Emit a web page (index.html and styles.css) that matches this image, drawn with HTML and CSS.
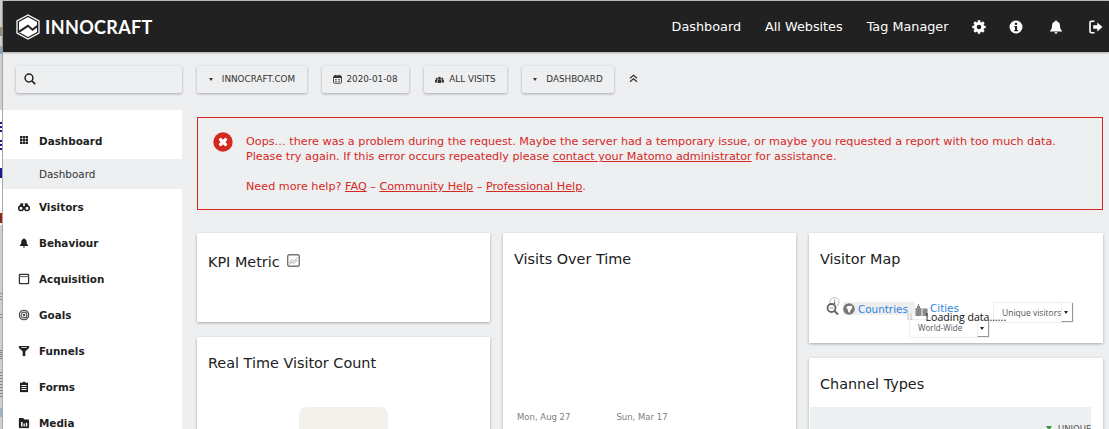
FILE: index.html
```html
<!DOCTYPE html>
<html lang="en">
<head>
<meta charset="utf-8">
<title>Innocraft Dashboard</title>
<link rel="stylesheet" href="styles.css">
</head>
<body>
<div class="strip">
  <span class="strip-bit bit-white"></span>
  <span class="strip-bit bit-a"></span>
  <span class="strip-bit bit-b"></span>
  <span class="strip-bit bit-c"></span>
  <span class="strip-bit bit-c2"></span>
  <span class="strip-bit bit-d"></span>
  <span class="strip-bit bit-e"></span>
  <span class="strip-bit bit-f"></span>
  <span class="strip-bit bit-g"></span>
  <span class="strip-bit bit-h"></span>
  <span class="strip-bit bit-i"></span>
  <span class="strip-bit bit-j"></span>
</div>
<div class="app">
  <header class="topbar">
    <a class="brand">
      <svg class="brand-mark" viewBox="0 0 24 26" width="24" height="26">
        <path d="M12 1 L23 7 V19 L12 25 L1 19 V7 Z" fill="none" stroke="#fff" stroke-width="1.3"/>
        <path d="M12 3 L21 8 V11 L16.5 14.5 L12 10.5 L3 16.5 V8 Z" fill="#fff"/>
        <path d="M3 19 L12 13 L16.5 17 L21 13.500 V18 L12 23 L3 18 Z" fill="#fff"/>
      </svg>
      <span class="brand-name">INNOCRAFT</span>
    </a>
    <nav class="topnav">
      <a class="topnav-link link-dashboard">Dashboard</a>
      <a class="topnav-link link-websites">All Websites</a>
      <a class="topnav-link link-tag">Tag Manager</a>
      <svg class="topicon icon-gear" viewBox="0 0 14 14" width="14" height="14">
        <g stroke="#fff" stroke-width="2.600">
          <path d="M7 0.300V13.700M0.300 7H13.700M2.260 2.260L11.740 11.740M2.260 11.740L11.740 2.260"/>
        </g>
        <circle cx="7" cy="7" r="5.200" fill="#fff"/>
        <circle cx="7" cy="7" r="2.300" fill="#212121"/>
      </svg>
      <svg class="topicon icon-info" viewBox="0 0 14 14" width="14" height="14">
        <circle cx="7" cy="7" r="6.500" fill="#fff"/>
        <rect x="5.900" y="2.700" width="2.200" height="2.200" rx="0.400" fill="#212121"/>
        <path d="M5.300 6H8.100V10H9V11.200H5.200V10H6V7.200H5.300Z" fill="#212121"/>
      </svg>
      <svg class="topicon icon-bell" viewBox="0 0 14 14" width="14" height="14">
        <path d="M7 0.500C7.600 0.500 8 0.900 8 1.500C10 2 11 3.600 11 6C11 8.700 12 9.800 13 10.800V11.500H1V10.800C2 9.800 3 8.700 3 6C3 3.600 4 2 6 1.500C6 0.900 6.400 0.500 7 0.500ZM5.500 12.300H8.500C8.500 13.200 7.800 13.800 7 13.800C6.200 13.800 5.500 13.200 5.500 12.300Z" fill="#fff"/>
      </svg>
      <svg class="topicon icon-exit" viewBox="0 0 14 14" width="14" height="14">
        <path d="M5.500 1.200H2.500C1.700 1.200 1 1.900 1 2.700V11.300C1 12.100 1.700 12.800 2.500 12.800H5.500" fill="none" stroke="#fff" stroke-width="1.600"/>
        <path d="M8.300 2.600L13.500 7L8.300 11.400V8.700H4.200V5.300H8.300Z" fill="#fff"/>
      </svg>
    </nav>
  </header>

  <div class="toolbar">
    <div class="tool tool-search">
      <svg viewBox="0 0 12 12" width="12" height="12">
        <circle cx="5" cy="5" r="3.900" fill="none" stroke="#212121" stroke-width="1.500"/>
        <path d="M8 8L11.200 11.200" stroke="#212121" stroke-width="1.700"/>
      </svg>
    </div>
    <div class="tool tool-site"><span class="caret"></span>INNOCRAFT.COM</div>
    <div class="tool tool-date">
      <svg viewBox="0 0 10 10" width="9" height="10">
        <path d="M1.500 1.500H8.500C9 1.500 9.500 2 9.500 2.500V8.800C9.500 9.300 9 9.700 8.500 9.700H1.500C1 9.700 0.500 9.300 0.500 8.800V2.500C0.500 2 1 1.500 1.500 1.500Z" fill="none" stroke="#333" stroke-width="1"/>
        <path d="M1 1.500H9V3.800H1ZM2.500 0.300H3.500V2H2.500ZM6.500 0.300H7.500V2H6.500ZM2.500 5H4V6.200H2.500ZM6 5H7.500V6.200H6ZM2.500 7H4V8.200H2.500ZM6 7H7.500V8.200H6Z" fill="#333"/>
      </svg>
      2020-01-08
    </div>
    <div class="tool tool-visits">
      <svg viewBox="0 0 12 9" width="9" height="7">
        <circle cx="6" cy="2.500" r="1.800" fill="#333"/>
        <circle cx="2.300" cy="3.500" r="1.500" fill="#333"/>
        <circle cx="9.700" cy="3.500" r="1.500" fill="#333"/>
        <path d="M3.500 9V6C3.500 5 4.500 4.300 6 4.300C7.500 4.300 8.500 5 8.500 6V9ZM0 8.500V6C0 5.300 1 4.800 2.800 5L2.600 8.500ZM12 8.500V6C12 5.300 11 4.800 9.200 5L9.400 8.500Z" fill="#333"/>
      </svg>
      ALL VISITS
    </div>
    <div class="tool tool-dash"><span class="caret"></span>DASHBOARD</div>
    <svg class="collapse" viewBox="0 0 9 9" width="9" height="9">
      <path d="M1 4.300L4.500 1.300L8 4.300M1 7.800L4.500 4.800L8 7.800" fill="none" stroke="#333" stroke-width="1.300"/>
    </svg>
  </div>

  <div class="body-row">
    <aside class="sidebar">
      <div class="menu-item menu-first">
        <svg class="menu-icon icon-grid" viewBox="0 0 7.500 7.500" width="8" height="8">
          <path d="M0 0H2.200V2.200H0ZM2.650 0H4.850V2.200H2.650ZM5.300 0H7.500V2.200H5.300ZM0 2.650H2.200V4.850H0ZM2.650 2.650H4.850V4.850H2.650ZM5.300 2.650H7.500V4.850H5.300ZM0 5.300H2.200V7.500H0ZM2.650 5.300H4.850V7.500H2.650ZM5.300 5.300H7.500V7.500H5.300Z" fill="#222"/>
        </svg>
        <span>Dashboard</span>
      </div>
      <div class="menu-sub">Dashboard</div>
      <div class="menu-item">
        <svg class="menu-icon" viewBox="0 0 12 9" width="12" height="9">
          <circle cx="3" cy="5.800" r="2.300" fill="#fff" stroke="#212121" stroke-width="1.600"/>
          <circle cx="9" cy="5.800" r="2.300" fill="#fff" stroke="#212121" stroke-width="1.600"/>
          <path d="M1 4.500L2.800 0.800H5.200V4H6.800V0.800H9.200L11 4.500Z" fill="#212121"/>
        </svg>
        <span>Visitors</span>
      </div>
      <div class="menu-item">
        <svg class="menu-icon" viewBox="0 0 10 11" width="9" height="11">
          <path d="M5 0.300C5.500 0.300 5.700 0.600 5.700 1C7.200 1.400 8 2.600 8 4.300C8 6.300 8.800 7.300 9.600 8V8.700H0.400V8C1.200 7.300 2 6.300 2 4.300C2 2.600 2.800 1.400 4.300 1C4.300 0.600 4.500 0.300 5 0.300ZM3.800 9.300H6.200C6.200 10 5.700 10.600 5 10.600C4.300 10.600 3.800 10 3.800 9.300Z" fill="#212121"/>
        </svg>
        <span>Behaviour</span>
      </div>
      <div class="menu-item">
        <svg class="menu-icon" viewBox="0 0 11 11" width="11" height="11">
          <rect x="0.800" y="0.800" width="9.400" height="9.400" rx="1.200" fill="none" stroke="#333" stroke-width="1.500"/>
          <path d="M1 3.200H10" stroke="#555" stroke-width="1"/>
        </svg>
        <span>Acquisition</span>
      </div>
      <div class="menu-item">
        <svg class="menu-icon" viewBox="0 0 11 11" width="11" height="11">
          <circle cx="5.500" cy="5.500" r="4.800" fill="none" stroke="#444" stroke-width="1.200"/>
          <circle cx="5.500" cy="5.500" r="2.900" fill="none" stroke="#555" stroke-width="1.200"/>
          <circle cx="5.500" cy="5.500" r="1.200" fill="#444"/>
        </svg>
        <span>Goals</span>
      </div>
      <div class="menu-item">
        <svg class="menu-icon" viewBox="0 0 11 11" width="11" height="11">
          <path d="M0 0.500H11L10.500 2.500L6.800 6V10.800H4.200V6L0.500 2.500ZM2.500 1.700L3 2.400H8L8.500 1.700Z" fill="#212121" fill-rule="evenodd"/>
        </svg>
        <span>Funnels</span>
      </div>
      <div class="menu-item">
        <svg class="menu-icon" viewBox="0 0 9 11" width="9" height="11">
          <path d="M3 0.300H6V1.300H8.500V10.800H0.500V1.300H3ZM2 3.500V4.500H7V3.500ZM2 5.500V6.500H7V5.500ZM2 7.500V8.500H7V7.500Z" fill="#212121" fill-rule="evenodd"/>
        </svg>
        <span>Forms</span>
      </div>
      <div class="menu-item">
        <svg class="menu-icon" viewBox="0 0 11 11" width="11" height="11">
          <path d="M1 0.500H4.500L6 2H9.500C10.200 2 10.700 2.500 10.700 3.200V9.500C10.700 10.200 10.200 10.700 9.500 10.700H1.500C0.800 10.700 0.300 10.200 0.300 9.500V1.200C0.300 0.800 0.600 0.500 1 0.500ZM2.500 4.500V9H4V4.500ZM5 6V9H6.300V6ZM7.300 5.300V9H8.700V5.300Z" fill="#212121" fill-rule="evenodd"/>
        </svg>
        <span>Media</span>
      </div>
    </aside>

    <main class="content">
      <section class="alert">
        <svg class="alert-icon" viewBox="0 0 20 20" width="20" height="20">
          <circle cx="10" cy="10" r="9.700" fill="#d4291f"/>
          <path d="M7.600 7.600L12.400 12.400M12.400 7.600L7.600 12.400" stroke="#fff" stroke-width="3.400" stroke-linecap="round"/>
        </svg>
        <div class="alert-text">
          <p>Oops… there was a problem during the request. Maybe the server had a temporary issue, or maybe you requested a report with too much data.<br>Please try again. If this error occurs repeatedly please <a>contact your Matomo administrator</a> for assistance.</p>
          <p>Need more help? <a>FAQ</a> – <a>Community Help</a> – <a>Professional Help</a>.</p>
        </div>
      </section>

      <div class="columns">
        <div class="column">
          <article class="card card-kpi">
            <h2 class="card-title title-kpi">KPI Metric
              <svg class="kpi-icon" viewBox="0 0 13 13" width="13" height="13">
                <rect x="0.700" y="0.700" width="11.600" height="11.600" rx="1.500" fill="none" stroke="#777" stroke-width="1.400"/>
                <path d="M2.500 9L5 5.500L7 7.500L10.500 3.500M2.500 10.500L5 8L7 9.500L10.500 6" fill="none" stroke="#999" stroke-width="0.800"/>
              </svg>
            </h2>
          </article>
          <article class="card card-realtime">
            <h2 class="card-title">Real Time Visitor Count</h2>
            <div class="gauge"></div>
          </article>
        </div>

        <div class="column">
          <article class="card card-visits">
            <h2 class="card-title">Visits Over Time</h2>
            <div class="axis"><span>Mon, Aug 27</span><span>Sun, Mar 17</span></div>
          </article>
        </div>

        <div class="column">
          <article class="card card-map">
            <h2 class="card-title">Visitor Map</h2>
            <div class="map">
              <svg class="map-zoom" viewBox="0 0 15 19" width="15" height="19">
                <circle cx="8.500" cy="5" r="4.500" fill="#fff" stroke="#bbb" stroke-width="1"/>
                <path d="M8.500 2.500V3.500M8.500 4.500V7.500" stroke="#777" stroke-width="1.300"/>
                <circle cx="5.500" cy="11" r="4" fill="#fff" stroke="#666" stroke-width="1.800"/>
                <path d="M8.500 14L12 17.500" stroke="#666" stroke-width="2"/>
                <path d="M3.500 11H7.500" stroke="#999" stroke-width="1"/>
              </svg>
              <div class="map-tab">
                <svg viewBox="0 0 13 13" width="12" height="12">
                  <circle cx="6.500" cy="6.500" r="6.300" fill="#777"/>
                  <path d="M4.500 3.500L9.500 3L10 5.500L8 8L7 11L5.500 9L5 6.500L3.500 5.500Z" fill="#fff"/>
                </svg>
                <a>Countries</a>
              </div>
              <svg class="map-city" viewBox="0 0 13 13" width="13" height="13">
                <path d="M0.500 13V5H2V3H3V1H4V3H5V5H6.500V13ZM7.500 13V5.500H12.500V13Z" fill="#888"/>
              </svg>
              <a class="map-cities">Cities</a>
              <span class="map-handle"></span>
              <div class="map-select select-region">World-Wide<i class="select-arrow"></i></div>
              <div class="map-select select-metric">Unique visitors<i class="select-arrow"></i></div>
              <div class="map-loading">Loading data......</div>
            </div>
          </article>
          <article class="card card-channel">
            <h2 class="card-title">Channel Types</h2>
            <div class="channel-table"><span class="sort-mark"></span><span class="channel-head">UNIQUE</span></div>
          </article>
        </div>
      </div>
    </main>
  </div>
</div>
</body>
</html>
```

FILE: styles.css
```css
* { box-sizing: border-box; }
html, body { margin: 0; height: 100%; }
body {
  display: flex;
  height: 429px;
  overflow: hidden;
  background: #eeeff1;
  color: #212121;
  font-family: "DejaVu Sans", sans-serif;
}
a { color: inherit; }
h2, p { margin: 0; font-weight: normal; }

.strip {
  position: relative;
  flex: 0 0 3px;
  background: #cfcfcf;
}
.strip::after {
  content: "";
  position: absolute;
  top: 0;
  bottom: 0;
  right: 0;
  width: 1px;
  background: #a8a8a8;
}
.strip-bit { position: absolute; left: 0; width: 2px; }
.bit-white { top: 110px; height: 115px; background: #fff; }
.bit-a { top: 27px; height: 9px; background: #a08d78; }
.bit-b { top: 46px; height: 8px; background: #8fa4c4; }
.bit-c { top: 122px; height: 10px; background: linear-gradient(#1a1a8c 0 2px, #fff 2px 4px, #1a1a8c 4px 6px, #fff 6px 8px, #1a1a8c 8px); }
.bit-c2 { top: 140px; height: 10px; background: linear-gradient(#1a1a8c 0 2px, #fff 2px 4px, #1a1a8c 4px 6px, #fff 6px 8px, #1a1a8c 8px); }
.bit-d { top: 168px; height: 10px; background: #1a1a8c; }
.bit-e { top: 213px; height: 10px; background: #8a2a1c; }
.bit-f { top: 293px; height: 9px; background: repeating-linear-gradient(#8d9298 0 1px, #cfcfcf 1px 3px); }
.bit-g { top: 314px; height: 6px; background: repeating-linear-gradient(#8d9298 0 1px, #cfcfcf 1px 3px); }
.bit-h { top: 350px; height: 10px; background: repeating-linear-gradient(#7d8288 0 1px, #cfcfcf 1px 2px); }
.bit-i { top: 372px; height: 26px; background: repeating-linear-gradient(#7d8288 0 1px, #cfcfcf 1px 3px); }
.bit-j { top: 408px; height: 9px; background: #9db3c9; }

.app {
  flex: 1;
  min-width: 0;
  display: flex;
  flex-direction: column;
  padding-top: 1px;
  background: #eeeff1;
  box-shadow: inset 0 1px 0 #bdbdbd;
}

.topbar {
  flex: 0 0 51px;
  display: flex;
  align-items: center;
  justify-content: space-between;
  padding-left: 13px;
  background: #212121;
  box-shadow: 0 1px 2px rgba(0, 0, 0, .3);
  position: relative;
  color: #fff;
}
.brand { display: flex; align-items: center; gap: 5px; }
.brand-name {
  font-family: Lato, sans-serif;
  font-size: 18px;
  font-weight: 700;
  letter-spacing: .35px;
}
.topnav {
  display: flex;
  align-items: center;
  height: 100%;
  font-size: 12.8px;
}
.topnav-link { color: #fff; }
.link-websites { margin-left: 24px; }
.link-tag { margin-left: 24px; }
.topicon { flex: none; }
.icon-gear { margin-left: 23px; }
.icon-info { margin-left: 23px; }
.icon-bell { margin-left: 26px; }
.icon-exit { margin-left: 26px; margin-right: 6.5px; }

.toolbar {
  flex: 0 0 58px;
  display: flex;
  align-items: flex-start;
  padding: 14px 0 0 13px;
  gap: 15px;
  font-size: 8.8px;
}
.tool {
  display: flex;
  align-items: center;
  justify-content: center;
  height: 27px;
  gap: 4px;
  padding-bottom: 1px;
  background: #eeeff1;
  border-radius: 2px;
  box-shadow: 0 1px 3px rgba(0, 0, 0, .3);
  color: #333;
}
.tool-search { width: 166px; justify-content: flex-start; padding-left: 8px; }
.tool-site { width: 110px; gap: 9px; }
.tool-date { width: 87px; }
.tool-visits { width: 83px; gap: 5px; }
.tool-dash { width: 92px; gap: 9px; }
.caret {
  width: 0;
  height: 0;
  border: 2px solid transparent;
  border-top: 3px solid #333;
  border-bottom: 0;
}
.collapse { margin: 8px 0 0 0; }

.body-row {
  flex: 1;
  min-height: 0;
  display: flex;
}
.sidebar {
  flex: 0 0 179px;
  padding-top: 13px;
  background: #fff;
  font-size: 10.4px;
  font-weight: 700;
}
.menu-item {
  position: relative;
  display: flex;
  align-items: center;
  height: 36px;
  padding-left: 36px;
}
.menu-icon {
  position: absolute;
  left: 20.500px;
  top: 50%;
  transform: translate(-50%, -50%);
}
.icon-grid { top: 46%; }
.menu-sub {
  display: flex;
  align-items: center;
  height: 30px;
  padding-left: 36px;
  background: #eeeff1;
  font-size: 10.400px;
  font-weight: 400;
  color: #333;
}

.content {
  flex: 1;
  min-width: 0;
  padding: 7px 6px 0 15px;
}
.alert {
  display: flex;
  height: 93px;
  padding: 16px 15px 0 15px;
  gap: 13px;
  border: 1px solid #d4291f;
  background: #eeeff1;
  color: #d4291f;
  font-size: 11.2px;
  line-height: 15px;
}
.alert-icon { flex: none; margin-top: -2px; }
.alert-text a { text-decoration: underline; }
.alert-text p + p { margin-top: 15px; }

.columns {
  display: grid;
  grid-template-columns: 293px 293px 294px;
  gap: 13px;
  margin-top: 23px;
}
.column { display: flex; flex-direction: column; gap: 15px; min-width: 0; }
.card {
  position: relative;
  background: #fff;
  border-radius: 1px;
  box-shadow: 0 1px 3px rgba(0, 0, 0, .3);
  padding: 0 11px;
}
.card-title {
  font-size: 14.4px;
  line-height: 20px;
  padding-top: 16px;
  color: #212121;
}
.title-kpi { padding-top: 19px; }
.kpi-icon { margin-left: 3px; vertical-align: 0; }
.card-kpi { height: 89px; }
.card-realtime { height: 120px; }
.gauge {
  width: 89px;
  height: 60px;
  margin: 34px auto 0;
  background: #f1f0eb;
  border-radius: 8px;
}
.card-visits { height: 240px; }
.axis {
  display: flex;
  gap: 46px;
  margin-top: 143px;
  padding-left: 3px;
  font-size: 8.500px;
  color: #808080;
}
.axis span { white-space: nowrap; }
.card-map { height: 110px; }
.card-channel { height: 120px; }

.map {
  position: relative;
  height: 70px;
  margin-top: 1px;
  font-size: 10.400px;
}
.map-zoom { position: absolute; left: 6px; top: 27px; }
.map-tab {
  position: absolute;
  left: 23px;
  top: 32px;
  display: flex;
  align-items: center;
  gap: 3px;
  width: 72px;
  height: 13px;
  background: #eee;
  color: #2e84e0;
}
.map-city { position: absolute; left: 95px; top: 33px; }
.map-cities { position: absolute; left: 110px; top: 32px; color: #2e84e0; line-height: 13px; }
.map-handle { position: absolute; left: 87px; top: 43px; width: 6px; height: 7px; background: repeating-linear-gradient(90deg, #ddd 0 2px, #f4f4f4 2px 3px); }
.map-select {
  position: absolute;
  display: flex;
  align-items: center;
  background: #fff;
  font-family: "Open Sans", sans-serif;
  font-size: 8.500px;
  color: #555;
  box-shadow: 0 0 1px rgba(0,0,0,.4);
  white-space: nowrap;
}
.select-region { left: 90px; top: 50px; width: 79px; height: 17px; padding-left: 8px; padding-bottom: 3px; font-size: 8.100px; }
.select-metric { left: 174px; top: 33px; width: 79px; height: 19px; padding-left: 8px; }
.select-arrow {
  position: absolute;
  right: 0;
  top: 0;
  bottom: 0;
  width: 12px;
  background: #fff;
  border-left: 1px solid #eee;
  border-right: 1px solid #999;
  border-bottom: 1px solid #999;
}
.select-arrow::after {
  content: "";
  position: absolute;
  left: 2px;
  top: 45%;
  border: 2.500px solid transparent;
  border-top: 3px solid #222;
  border-bottom: 0;
}
.map-loading {
  position: absolute;
  left: 105.500px;
  top: 40px;
  font-family: "Open Sans", sans-serif;
  font-size: 10.600px;
  line-height: 14px;
  color: #111;
  white-space: nowrap;
}
.channel-table {
  position: absolute;
  left: 1px;
  right: 12px;
  top: 49px;
  bottom: 0;
  background: #eeeff1;
  overflow: hidden;
}
.sort-mark {
  position: absolute;
  right: 39px;
  top: 19px;
  border: 3px solid transparent;
  border-top: 5px solid #3b9a3b;
  border-bottom: 0;
}
.channel-head {
  position: absolute;
  left: 248px;
  top: 17px;
  font-size: 8.500px;
  color: #555;
}
```
